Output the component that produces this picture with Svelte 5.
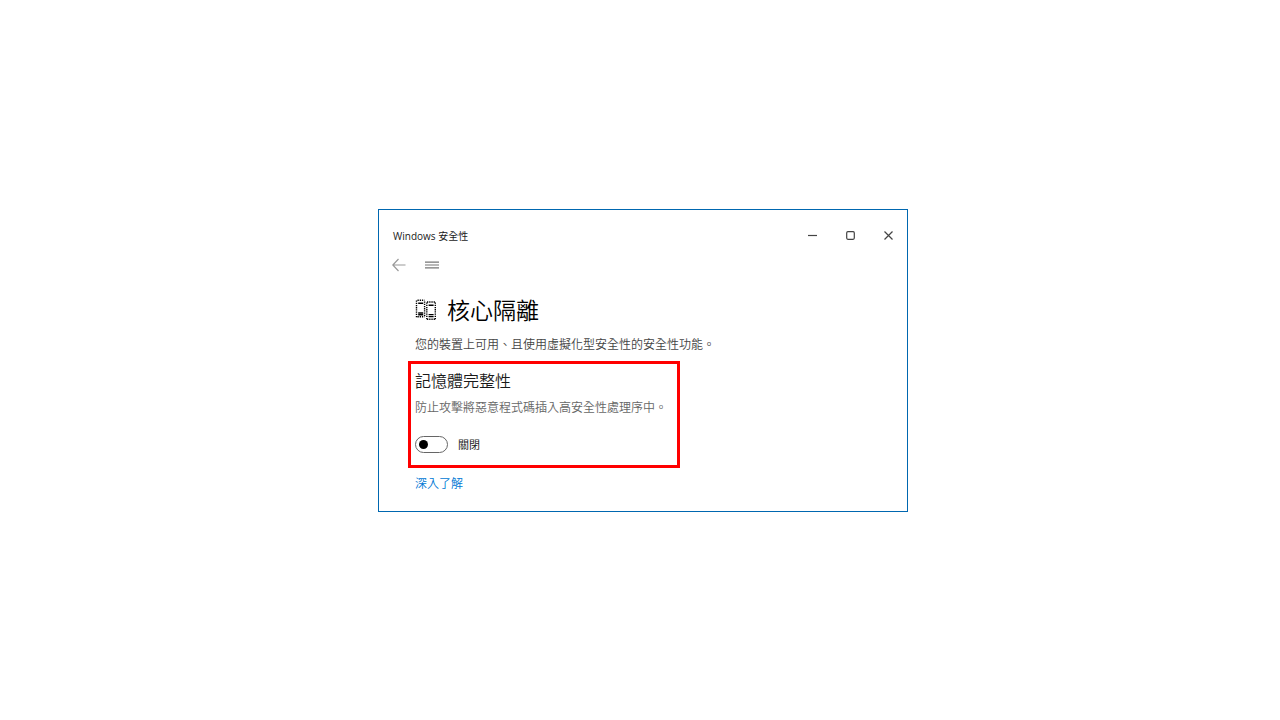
<script lang="ts">
  let memoryIntegrity = $state(false);
</script>

<main class="page">
  <section class="window">
    <header class="titlebar">
      <span class="app-name">Windows 安全性</span>
      <div class="controls">
        <button aria-label="最小化">
          <svg width="11" height="11" viewBox="0 0 11 11"><path d="M1 5.5h9" /></svg>
        </button>
        <button aria-label="最大化">
          <svg width="11" height="11" viewBox="0 0 11 11"><rect x="1.7" y="1.7" width="7.6" height="7.6" rx="1.2" /></svg>
        </button>
        <button aria-label="關閉視窗">
          <svg width="11" height="11" viewBox="0 0 11 11"><path d="M1.5 1.5l8 8M9.5 1.5l-8 8" /></svg>
        </button>
      </div>
    </header>

    <nav class="nav">
      <button class="back" aria-label="上一頁">
        <svg width="14" height="14" viewBox="0 0 14 14"><path d="M13.5 7H1M6.5 1L.8 7l5.7 6" /></svg>
      </button>
      <button class="menu" aria-label="功能表">
        <svg width="14" height="14" viewBox="0 0 14 14"><path d="M0 4.2h14M0 7h14M0 9.8h14" /></svg>
      </button>
    </nav>

    <div class="content">
      <h1>
        <svg width="22" height="22" viewBox="0 0 22 22">
          <g class="dots">
            <path d="M2.5 1.2h7M1.5 1.5v17M2.5 17.8h7M9.6 2.5v15" />
            <path d="M12 3h8M11.8 3.5v17M20.3 3.5v17M12 20.2h8" />
          </g>
          <path class="bars" d="M3.2 4.3h5M3.2 14h5M3.2 15.8h5M13.6 6.2h5M13.6 15.6h5M13.6 17.6h5" />
        </svg>
        核心隔離
      </h1>
      <p class="intro">您的裝置上可用、且使用虛擬化型安全性的安全性功能。</p>

      <section class="highlight">
        <h2>記憶體完整性</h2>
        <p>防止攻擊將惡意程式碼插入高安全性處理序中。</p>
        <label class="switch">
          <input type="checkbox" role="switch" bind:checked={memoryIntegrity} />
          <span>{memoryIntegrity ? "開啟" : "關閉"}</span>
        </label>
      </section>

      <a href="#learn-more">深入了解</a>
    </div>
  </section>
</main>

<style>
  :global(body) {
    background: #fff;
  }

  .page {
    display: flex;
    align-items: center;
    justify-content: center;
    min-height: 100vh;
    padding: 1px 0 0 6px;
    box-sizing: border-box;
    font-family: "Open Sans", "Noto Sans CJK TC", sans-serif;
    color: #1a1a1a;
  }

  .window {
    width: 100%;
    max-width: 530px;
    box-sizing: border-box;
    border: 1px solid #0067b0;
    background: #fff;
  }

  .titlebar {
    display: flex;
    align-items: center;
    justify-content: space-between;
    height: 32px;
    padding: 10px 0 0 14px;
  }

  .app-name {
    font-size: 10px;
    line-height: 16px;
  }

  .controls {
    display: flex;
  }

  button {
    display: flex;
    align-items: center;
    justify-content: center;
    padding: 0;
    border: 0;
    background: none;
    color: #444;
  }

  .controls button {
    width: 38px;
    height: 24px;
  }

  svg {
    fill: none;
    stroke: currentColor;
    stroke-width: 1.2;
  }

  .nav {
    display: flex;
    gap: 19px;
    padding: 6px 13px;
  }

  .nav button {
    height: 14px;
  }

  .back {
    color: #999;
  }

  .menu {
    color: #777;
  }

  .content {
    padding: 17px 30px 18px;
  }

  h1 {
    display: flex;
    align-items: center;
    gap: 10px;
    margin: 0 0 11px 6px;
    font-size: 23px;
    font-weight: 350;
    line-height: 30px;
    color: #000;
  }

  .dots {
    stroke-width: 1.4;
    stroke-dasharray: 1.3 0.9;
  }

  .bars {
    stroke-width: 1.4;
  }

  p {
    margin: 0;
    font-size: 12px;
    font-weight: 350;
    line-height: 18px;
    color: #666;
  }

  .intro {
    margin-left: 6px;
    color: #444;
  }

  .highlight {
    width: 272px;
    max-width: 100%;
    box-sizing: border-box;
    margin: 7px 0 3px -1px;
    padding: 5px 4px 11px;
    border: 3px solid #f00;
  }

  h2 {
    margin: 0 0 6px;
    font-size: 16px;
    font-weight: 350;
    line-height: 24px;
  }

  .switch {
    display: inline-flex;
    align-items: center;
    gap: 10px;
    margin-top: 19px;
    font-size: 11px;
    line-height: 18px;
  }

  .switch input {
    appearance: none;
    display: flex;
    align-items: center;
    width: 33px;
    height: 17px;
    margin: 0;
    padding: 0 3px;
    box-sizing: border-box;
    border: 1px solid #666;
    border-radius: 9px;
  }

  .switch input::before {
    content: "";
    width: 9px;
    height: 9px;
    border-radius: 50%;
    background: #000;
  }

  .switch input:checked {
    justify-content: flex-end;
  }

  a {
    display: inline-block;
    margin-left: 6px;
    font-size: 12px;
    font-weight: 350;
    line-height: 18px;
    color: #0078d4;
    text-decoration: none;
  }
</style>
